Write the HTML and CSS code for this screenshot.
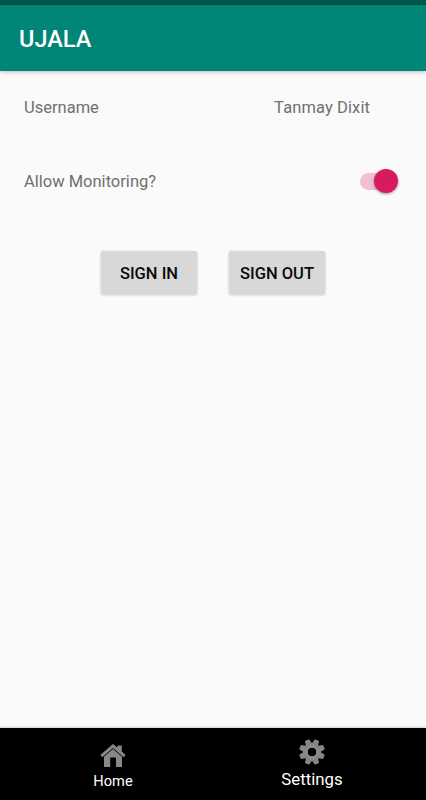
FILE: index.html
```html
<!DOCTYPE html>
<html lang="en">
<head>
    <meta charset="UTF-8">
    <meta name="viewport" content="width=device-width, initial-scale=1.0">
    <title>UJALA</title>
    <link rel="stylesheet" href="styles.css">
</head>
<body>
    <div class="statusbar"></div>
    <header class="toolbar">
        <h1>UJALA</h1>
    </header>
    <main class="content">
        <div class="row">
            <span class="label">Username</span>
            <span class="value">Tanmay Dixit</span>
        </div>
        <div class="row">
            <label class="label monitoring" for="monitoring">Allow Monitoring?</label>
            <div class="switch">
                <input type="checkbox" id="monitoring" name="monitoring" checked>
            </div>
        </div>
        <div class="buttons">
            <button type="button" class="signin">SIGN IN</button>
            <button type="button" class="signout">SIGN OUT</button>
        </div>
    </main>
    <nav class="tabs">
        <a class="tab home">
            <svg width="26" height="23" viewBox="0 0 26 23">
                <path d="M0.3 11 L13 0 L17.4 3.8 V1.4 H21.8 V7.6 L25.7 11 L23.7 13.2 L13 3.9 L2.3 13.2 Z"/>
                <path d="M13 5 L22 12.8 V23 H16 V13.4 H10.2 V23 H4 V12.8 Z"/>
            </svg>
            <span>Home</span>
        </a>
        <a class="tab settings">
            <svg width="26" height="26" viewBox="-13 -13 26 26">
                <defs>
                    <path id="tooth" d="M-3.5 -7 L-2.4 -12.4 Q-2.3 -12.9 -1.8 -12.9 H1.8 Q2.3 -12.9 2.4 -12.4 L3.5 -7 Z"/>
                </defs>
                <g transform="rotate(22.5)">
                    <use href="#tooth"/>
                    <use href="#tooth" transform="rotate(45)"/>
                    <use href="#tooth" transform="rotate(90)"/>
                    <use href="#tooth" transform="rotate(135)"/>
                    <use href="#tooth" transform="rotate(180)"/>
                    <use href="#tooth" transform="rotate(225)"/>
                    <use href="#tooth" transform="rotate(270)"/>
                    <use href="#tooth" transform="rotate(315)"/>
                </g>
                <circle class="ring" r="6.5"/>
                <circle class="hole" r="4"/>
            </svg>
            <span>Settings</span>
        </a>
    </nav>
</body>
</html>
```

FILE: styles.css
```css
*{
    margin: 0;
    padding: 0;
    box-sizing: border-box;
}
body{
    height: 100vh;
    display: flex;
    flex-direction: column;
    overflow: hidden;
    background: #fafafa;
    font-family: Roboto, sans-serif;
}

.statusbar{
    height: 5px;
    background: #00574b;
}

.toolbar{
    height: 66px;
    padding-left: 19px;
    display: flex;
    align-items: center;
    background: #008577;
    box-shadow: 0 1px 4px rgba(0, 0, 0, 0.25);
}
.toolbar h1{
    padding-top: 2px;
    font-size: 23.5px;
    font-weight: 500;
    color: #fff;
}

.content{
    flex: 1;
    padding-top: 24px;
}

.row{
    height: 24px;
    margin-bottom: 50px;
    padding: 0 28px 0 24px;
    display: flex;
    justify-content: space-between;
    align-items: center;
    font-size: 16.5px;
    color: #707070;
}
.row .value{
    margin-right: 28px;
    letter-spacing: 0.1px;
}

.switch{
    width: 38px;
    height: 24px;
    display: flex;
    align-items: center;
}
.switch input{
    appearance: none;
    width: 34px;
    height: 17px;
    border-radius: 9px;
    background: #f2bed1;
    display: flex;
    align-items: center;
}
.switch input::before{
    content: "";
    flex: none;
    width: 24px;
    height: 24px;
    margin-left: 14px;
    border-radius: 50%;
    background: #d81b60;
    box-shadow: 0 1px 3px rgba(0, 0, 0, 0.4);
}

.buttons{
    margin-top: 58px;
    display: flex;
    justify-content: center;
    gap: 32.6px;
}
.buttons button{
    width: 95.4px;
    height: 43px;
    padding-top: 1px;
    border: none;
    border-radius: 2px;
    background: #d8d8d8;
    box-shadow: 0 1px 3px rgba(0, 0, 0, 0.2);
    font-family: inherit;
    font-size: 16.5px;
    font-weight: 500;
    color: #0a0a0a;
}

.tabs{
    height: 72px;
    display: flex;
    background: #000;
    box-shadow: 0 0 3px rgba(0, 0, 0, 0.3);
}
.tab{
    display: flex;
    flex-direction: column;
    align-items: center;
    color: #fff;
}
.tab svg{
    fill: #878787;
}
.tab .hole{
    fill: #000;
}
.tab .ring{
    fill: none;
    stroke: #878787;
    stroke-width: 5;
}
.home{
    width: 226px;
    padding-top: 16px;
    font-size: 14.6px;
}
.home span{
    margin-top: 5px;
}
.settings{
    width: 172px;
    padding-top: 11px;
    font-size: 16.8px;
}
.settings span{
    margin-top: 4px;
}
```
